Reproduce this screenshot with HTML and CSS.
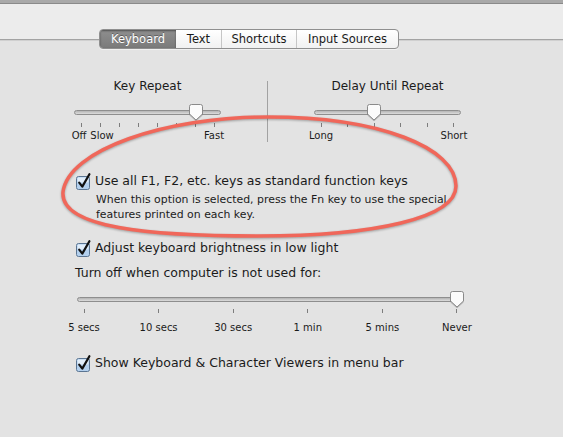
FILE: index.html
```html
<!DOCTYPE html>
<html lang="en">
<head>
<meta charset="utf-8">
<title>Keyboard</title>
<link rel="stylesheet" href="styles.css">
</head>
<body>
<div class="titlebar"></div>
<div class="toolbar"></div>
<nav class="tabs">
  <span class="tab tab-active w-kb">Keyboard</span>
  <span class="tab w-text">Text</span>
  <span class="tab tab-sep w-sc">Shortcuts</span>
  <span class="tab tab-sep w-is">Input Sources</span>
</nav>
<main class="panel">
  <section class="repeat">
    <div class="col">
      <div class="col-title">Key Repeat</div>
      <div class="slider slider-small">
        <div class="rail">
          <div class="track"></div>
          <svg class="thumb" style="left:114px" viewBox="0 0 16 18" width="16" height="18"><path d="M1.5 3.5Q1.5 1.5 3.5 1.5H12.5Q14.5 1.5 14.5 3.5V11L8 17L1.5 11Z" fill="#fbfbfb" stroke="#8a8a8a"/></svg>
        </div>
        <div class="stops">
          <div class="stop"><i class="tick"></i><span class="stop-label nudge-left">Off</span></div>
          <div class="stop"><i class="tick"></i><span class="stop-label nudge-right">Slow</span></div>
          <div class="stop"><i class="tick"></i><span class="stop-label"></span></div>
          <div class="stop"><i class="tick"></i><span class="stop-label"></span></div>
          <div class="stop"><i class="tick"></i><span class="stop-label"></span></div>
          <div class="stop"><i class="tick"></i><span class="stop-label"></span></div>
          <div class="stop"><i class="tick"></i><span class="stop-label"></span></div>
          <div class="stop"><i class="tick"></i><span class="stop-label">Fast</span></div>
        </div>
      </div>
    </div>
    <div class="vdivider"></div>
    <div class="col">
      <div class="col-title">Delay Until Repeat</div>
      <div class="slider slider-small">
        <div class="rail">
          <div class="track"></div>
          <svg class="thumb" style="left:52px" viewBox="0 0 16 18" width="16" height="18"><path d="M1.5 3.5Q1.5 1.5 3.5 1.5H12.5Q14.5 1.5 14.5 3.5V11L8 17L1.5 11Z" fill="#fbfbfb" stroke="#8a8a8a"/></svg>
        </div>
        <div class="stops">
          <div class="stop"><i class="tick"></i><span class="stop-label">Long</span></div>
          <div class="stop"><i class="tick"></i><span class="stop-label"></span></div>
          <div class="stop"><i class="tick"></i><span class="stop-label"></span></div>
          <div class="stop"><i class="tick"></i><span class="stop-label"></span></div>
          <div class="stop"><i class="tick"></i><span class="stop-label"></span></div>
          <div class="stop"><i class="tick"></i><span class="stop-label">Short</span></div>
        </div>
      </div>
    </div>
  </section>

  <label class="check check-fn">
    <svg class="box" viewBox="0 0 16 18" width="16" height="18"><rect x="0.5" y="4.5" width="13" height="13" rx="2" fill="#b3d0ee" stroke="#5b7592"/><rect x="1.5" y="5.5" width="11" height="5" rx="1" fill="#e2eefa"/><path d="M3.2 10.6L6.3 14.6L13.4 2.2" fill="none" stroke="#111" stroke-width="2.2" stroke-linecap="round" stroke-linejoin="round"/></svg>
    <span class="check-text">Use all F1, F2, etc. keys as standard function keys</span>
  </label>
  <p class="desc">When this option is selected, press the Fn key to use the special<br>features printed on each key.</p>

  <label class="check check-bright">
    <svg class="box" viewBox="0 0 16 18" width="16" height="18"><rect x="0.5" y="4.5" width="13" height="13" rx="2" fill="#b3d0ee" stroke="#5b7592"/><rect x="1.5" y="5.5" width="11" height="5" rx="1" fill="#e2eefa"/><path d="M3.2 10.6L6.3 14.6L13.4 2.2" fill="none" stroke="#111" stroke-width="2.2" stroke-linecap="round" stroke-linejoin="round"/></svg>
    <span class="check-text">Adjust keyboard brightness in low light</span>
  </label>
  <div class="turnoff">Turn off when computer is not used for:</div>
  <div class="slider slider-wide">
    <div class="rail">
      <div class="track"></div>
      <svg class="thumb" style="left:372px" viewBox="0 0 16 18" width="16" height="18"><path d="M1.5 3.5Q1.5 1.5 3.5 1.5H12.5Q14.5 1.5 14.5 3.5V11L8 17L1.5 11Z" fill="#fbfbfb" stroke="#8a8a8a"/></svg>
    </div>
    <div class="stops">
      <div class="stop"><i class="tick"></i><span class="stop-label">5 secs</span></div>
      <div class="stop"><i class="tick"></i><span class="stop-label">10 secs</span></div>
      <div class="stop"><i class="tick"></i><span class="stop-label">30 secs</span></div>
      <div class="stop"><i class="tick"></i><span class="stop-label">1 min</span></div>
      <div class="stop"><i class="tick"></i><span class="stop-label">5 mins</span></div>
      <div class="stop"><i class="tick"></i><span class="stop-label">Never</span></div>
    </div>
  </div>

  <label class="check check-viewer">
    <svg class="box" viewBox="0 0 16 18" width="16" height="18"><rect x="0.5" y="4.5" width="13" height="13" rx="2" fill="#b3d0ee" stroke="#5b7592"/><rect x="1.5" y="5.5" width="11" height="5" rx="1" fill="#e2eefa"/><path d="M3.2 10.6L6.3 14.6L13.4 2.2" fill="none" stroke="#111" stroke-width="2.2" stroke-linecap="round" stroke-linejoin="round"/></svg>
    <span class="check-text">Show Keyboard &amp; Character Viewers in menu bar</span>
  </label>
</main>

<svg class="annotation" viewBox="0 0 563 437" width="563" height="437">
  <path d="M63 192C68 150 165 117 268 117C380 117 456 148 456 186C456 218 375 236 258 236C150 236 60 228 63 192Z" fill="none" stroke="#f0675a" stroke-width="3.5"/>
</svg>
</body>
</html>
```

FILE: styles.css
```css
html, body {
  margin: 0;
  padding: 0;
}
body {
  width: 563px;
  height: 437px;
  overflow: hidden;
  background: #e3e3e3;
  font-family: "DejaVu Sans", "Liberation Sans", sans-serif;
  color: #1b1b1b;
  position: relative;
}
.titlebar {
  height: 3px;
  background: #a9a9a9;
  border-bottom: 1px solid #8a8a8a;
}
.toolbar {
  height: 35px;
  background: #ececec;
  border-bottom: 1px solid #a3a3a3;
  box-shadow: 0 1px 0 #d0d0d0;
}
.tabs {
  display: flex;
  width: fit-content;
  height: 20px;
  box-sizing: border-box;
  margin: -11px 0 0 99px;
  border: 1px solid #8f8f8f;
  border-radius: 4px;
  background: linear-gradient(#ffffff, #f1f1f1);
  overflow: hidden;
  box-shadow: 0 1px 0 rgba(255,255,255,0.5);
}
.tab {
  display: flex;
  align-items: center;
  justify-content: center;
  box-sizing: border-box;
  font-size: 11.5px;
  color: #1a1a1a;
}
.tab-sep {
  border-left: 1px solid #c6c6c6;
}
.tab-active {
  background: linear-gradient(#8f8f8f, #7a7a7a);
  color: #fff;
  text-shadow: 0 -1px 0 rgba(0,0,0,0.35);
  box-shadow: inset 0 1px 2px rgba(0,0,0,0.45);
}
.w-kb { width: 76px; }
.w-text { width: 45px; }
.w-sc { width: 75px; }
.w-is { width: 102px; }

.panel {
  padding-left: 74px;
}
.repeat {
  display: flex;
  margin-top: 30px;
}
.col {
  width: 147px;
}
.col-title {
  font-size: 12px;
  line-height: 15px;
  text-align: center;
}
.vdivider {
  width: 1px;
  margin: 2px 46px 0 46px;
  background: #a2a2a2;
}
.slider-small {
  margin-top: 9px;
  width: 147px;
}
.rail {
  position: relative;
  height: 18px;
  box-sizing: border-box;
  padding-top: 7px;
}
.track {
  height: 5px;
  box-sizing: border-box;
  border: 1px solid #8e8e8e;
  border-radius: 3px;
  background: linear-gradient(#b4b4b4, #dcdcdc);
}
.thumb {
  position: absolute;
  top: 0;
  display: block;
  filter: drop-shadow(0 1px 0.5px rgba(0,0,0,0.2));
}
.stops {
  display: flex;
  justify-content: space-between;
  padding: 0 7px;
  margin-top: 2px;
}
.stop {
  width: 0;
  display: flex;
  flex-direction: column;
  align-items: center;
}
.tick {
  display: block;
  width: 1px;
  height: 4px;
  background: #7d7d7d;
  flex: none;
}
.stop-label {
  display: block;
  height: 12px;
  margin-top: 3px;
  font-size: 10px;
  line-height: 12px;
  white-space: nowrap;
}
.nudge-left {
  transform: translateX(-2px);
}
.nudge-right {
  transform: translateX(2px);
}

.check {
  display: flex;
  align-items: flex-start;
  margin-left: 2px;
}
.check .box {
  display: block;
  flex: none;
  margin-top: -1px;
  margin-right: 3px;
}
.check-text {
  font-size: 12.5px;
  line-height: 16px;
}
.check-fn {
  margin-top: 31px;
}
.desc {
  margin: 2px 0 0 22px;
  font-size: 10.9px;
  line-height: 15px;
}
.check-bright {
  margin-top: 18px;
}
.turnoff {
  margin: 8px 0 0 1px;
  font-size: 12.5px;
  line-height: 16px;
}
.slider-wide {
  width: 387px;
  margin: 9px 0 0 3px;
}
.slider-wide .stops {
  margin-top: 1px;
}
.slider-wide .stop-label {
  margin-top: 9px;
}
.check-viewer {
  margin-top: 21px;
}

.annotation {
  position: absolute;
  left: 0;
  top: 0;
  pointer-events: none;
  filter: drop-shadow(0 1px 1px rgba(0,0,0,0.3));
}
```
